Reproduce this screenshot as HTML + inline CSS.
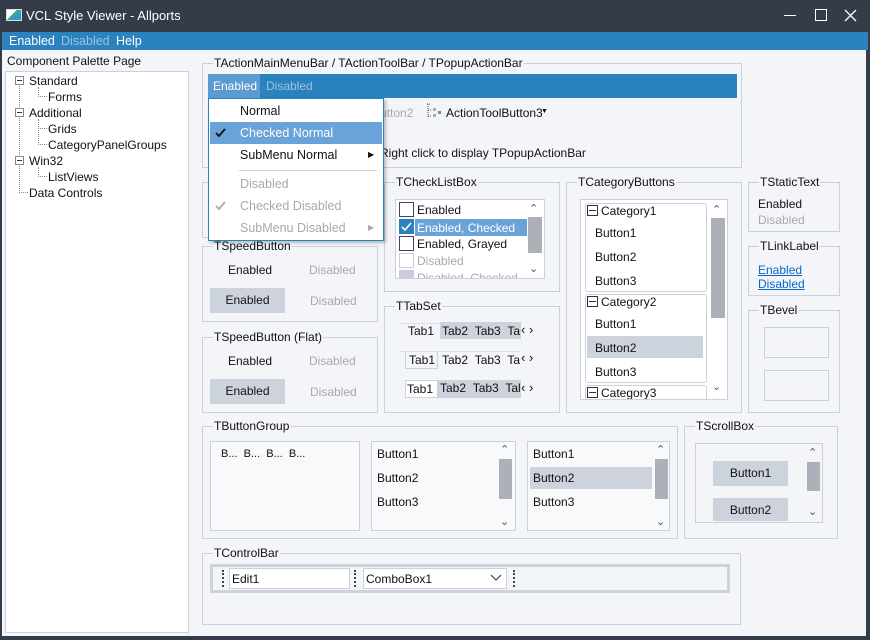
<!DOCTYPE html>
<html><head><meta charset="utf-8"><style>
*{box-sizing:border-box;margin:0;padding:0}
body{width:870px;height:640px;overflow:hidden;background:#343c4a;font-family:"Liberation Sans",sans-serif;font-size:12px;color:#111;position:relative}
.a{position:absolute;white-space:nowrap}
.g{position:absolute;border:1px solid #cbd1db}
.g>.l{position:absolute;left:10px;top:-8px;background:#f3f5f9;padding:0 1px;line-height:14px}
.w{background:#fff;border:1px solid #cbd1db;position:absolute}
.d{color:#a6a9b0}
.btn{position:absolute;background:#cdd3dc;text-align:center}
.sb{position:absolute;background:#adb0b9;width:14px}
.chev{position:absolute;font-size:11px;color:#555}
.pm{position:absolute;width:9px;height:9px;border:1px solid #888;background:#fff}
.pm:after{content:"";position:absolute;left:1px;top:3px;width:5px;border-top:1px solid #333}
</style></head><body>
<!-- title -->
<div class="a" style="left:6px;top:9px;width:16px;height:12px;background:linear-gradient(135deg,#fff 0 40%,#3a8 40% 55%,#39c 55%);border:1px solid #ddd"></div>
<div class="a" style="left:26px;top:8px;color:#fff;font-size:13px">VCL Style Viewer - Allports</div>
<div class="a" style="left:784px;top:15px;width:12px;height:1px;background:#fff"></div>
<div class="a" style="left:815px;top:9px;width:12px;height:12px;border:1px solid #fff"></div>
<svg class="a" style="left:844px;top:9px" width="13" height="13"><path d="M1 1L12 12M12 1L1 12" stroke="#fff" stroke-width="1.3"/></svg>
<!-- menubar -->
<div class="a" style="left:2px;top:32px;width:866px;height:18px;background:#2a82bf"></div>
<div class="a" style="left:9px;top:34px;color:#fff;font-size:12.5px">Enabled</div>
<div class="a" style="left:61px;top:34px;color:#9fc2dc;font-size:12.5px">Disabled</div>
<div class="a" style="left:116px;top:34px;color:#fff;font-size:12.5px">Help</div>
<!-- body -->
<div class="a" style="left:2px;top:50px;width:864px;height:586px;background:#f3f5f9"></div>
<div class="a" style="left:7px;top:54px">Component Palette Page</div>
<div class="w" style="left:5px;top:71px;width:184px;height:562px;border-color:#cbd1db"></div>
<div class="a" style="left:19px;top:86px;height:107px;border-left:1px dotted #888"></div>
<div class="a" style="left:19px;top:192px;width:9px;border-top:1px dotted #888"></div>
<div class="a" style="left:38px;top:87px;height:10px;border-left:1px dotted #888;width:9px;border-bottom:1px dotted #888"></div>
<div class="a" style="left:38px;top:119px;height:26px;border-left:1px dotted #888;width:9px;border-bottom:1px dotted #888"></div>
<div class="a" style="left:38px;top:128px;width:9px;border-top:1px dotted #888"></div>
<div class="a" style="left:38px;top:167px;height:10px;border-left:1px dotted #888;width:9px;border-bottom:1px dotted #888"></div>
<div class="pm" style="left:15px;top:76px"></div>
<div class="pm" style="left:15px;top:108px"></div>
<div class="pm" style="left:15px;top:156px"></div>
<div class="a" style="left:29px;top:74px">Standard</div>
<div class="a" style="left:48px;top:90px">Forms</div>
<div class="a" style="left:29px;top:106px">Additional</div>
<div class="a" style="left:48px;top:122px">Grids</div>
<div class="a" style="left:48px;top:138px">CategoryPanelGroups</div>
<div class="a" style="left:29px;top:154px">Win32</div>
<div class="a" style="left:48px;top:170px">ListViews</div>
<div class="a" style="left:29px;top:186px">Data Controls</div>

<!-- action bar group -->
<div class="g" style="left:202px;top:63px;width:540px;height:105px"><span class="l">TActionMainMenuBar / TActionToolBar / TPopupActionBar</span></div>
<div class="a" style="left:208px;top:74px;width:529px;height:24px;background:#2a82bf"></div>
<div class="a" style="left:208px;top:74px;width:52px;height:24px;background:#5b9bd0"></div>
<div class="a" style="left:213px;top:79px;color:#fff">Enabled</div>
<div class="a" style="left:266px;top:79px;color:#9fc2dc">Disabled</div>
<div class="a d" style="left:380px;top:106px">utton2</div>
<svg class="a" style="left:426px;top:103px" width="16" height="16"><path d="M1 1h3M2 1v13M2 7h4M2 13h4" stroke="#556" fill="none" stroke-dasharray="1 1"/><rect x="7" y="5" width="3" height="3" fill="#9b8"/><rect x="7" y="11" width="3" height="3" fill="#9b8"/><rect x="12" y="8" width="3" height="3" fill="#889"/></svg>
<div class="a" style="left:446px;top:106px">ActionToolButton3</div>
<div class="a" style="left:541px;top:108px;font-size:7px">▼</div>
<div class="a" style="left:380px;top:146px">Right click to display TPopupActionBar</div>

<div class="g" style="left:202px;top:182px;width:176px;height:56px"></div>
<div class="g" style="left:202px;top:246px;width:176px;height:76px"><span class="l">TSpeedButton</span></div>
<div class="a" style="left:228px;top:263px">Enabled</div>
<div class="a d" style="left:309px;top:263px">Disabled</div>
<div class="btn" style="left:210px;top:288px;width:75px;height:25px;line-height:25px">Enabled</div>
<div class="a d" style="left:310px;top:294px">Disabled</div>
<div class="g" style="left:202px;top:337px;width:176px;height:76px"><span class="l">TSpeedButton (Flat)</span></div>
<div class="a" style="left:228px;top:354px">Enabled</div>
<div class="a d" style="left:309px;top:354px">Disabled</div>
<div class="btn" style="left:210px;top:379px;width:75px;height:25px;line-height:25px">Enabled</div>
<div class="a d" style="left:310px;top:385px">Disabled</div>

<!-- checklistbox -->
<div class="g" style="left:384px;top:182px;width:176px;height:110px"><span class="l">TCheckListBox</span></div>
<div class="w" style="left:395px;top:199px;width:150px;height:80px;overflow:hidden">
 <div class="a" style="left:3px;top:2px;width:15px;height:15px;border:1px solid #445"></div><div class="a" style="left:21px;top:3px">Enabled</div>
 <div class="a" style="left:3px;top:19px;width:15px;height:15px;background:#2a82bf"></div>
 <svg class="a" style="left:4px;top:20px" width="13" height="13"><path d="M2 7l3 3 6-7" stroke="#fff" stroke-width="1.6" fill="none"/></svg>
 <div class="a" style="left:19px;top:19px;width:112px;height:17px;background:#6aa3d8;color:#fff;padding:2px">Enabled, Checked</div>
 <div class="a" style="left:3px;top:36px;width:15px;height:15px;border:1px solid #445"></div><div class="a" style="left:21px;top:37px">Enabled, Grayed</div>
 <div class="a" style="left:3px;top:53px;width:15px;height:15px;border:1px solid #ccd"></div><div class="a d" style="left:21px;top:54px">Disabled</div>
 <div class="a" style="left:3px;top:70px;width:15px;height:15px;background:#ccd"></div><div class="a d" style="left:21px;top:71px">Disabled, Checked</div>
 <div class="sb" style="left:132px;top:17px;height:36px"></div>
 <div class="chev" style="left:133px;top:2px">⌃</div><div class="chev" style="left:133px;top:62px">⌄</div>
</div>

<!-- tabset -->
<div class="g" style="left:384px;top:306px;width:176px;height:107px"><span class="l">TTabSet</span></div>
<div class="a" style="left:400px;top:323px;width:144px;height:16px;border-top:1px solid #dde"></div>
<div class="a" style="left:408px;top:324px">Tab1</div>
<div class="a" style="left:440px;top:322px;width:92px;height:17px;background:#cdd3dc"></div>
<div class="a" style="left:442px;top:324px">Tab2 &nbsp;Tab3 &nbsp;Ta</div>
<div class="a" style="left:521px;top:322px;width:22px;height:18px;background:#f3f5f9;font-size:13px">‹ ›</div>
<div class="a" style="left:400px;top:351px;width:144px;border-top:1px solid #dde"></div>
<div class="a" style="left:405px;top:351px;width:33px;height:18px;border:1px solid #cbd1db;border-top:none"></div>
<div class="a" style="left:409px;top:353px">Tab1</div><div class="a" style="left:442px;top:353px">Tab2 &nbsp;Tab3 &nbsp;Ta</div>
<div class="a" style="left:521px;top:350px;width:22px;height:18px;background:#f3f5f9;font-size:13px">‹ ›</div>
<div class="a" style="left:405px;top:380px;width:133px;height:18px;background:#cdd3dc"></div>
<div class="a" style="left:405px;top:380px;width:33px;height:18px;background:#fff;border:1px solid #cbd1db"></div>
<div class="a" style="left:407px;top:382px">Tab1</div><div class="a" style="left:440px;top:381px">Tab2 &nbsp;Tab3 &nbsp;Tal</div>
<div class="a" style="left:521px;top:380px;width:22px;height:18px;background:#f3f5f9;font-size:13px">‹ ›</div>

<!-- category buttons -->
<div class="g" style="left:566px;top:182px;width:176px;height:231px"><span class="l">TCategoryButtons</span></div>
<div class="w" style="left:580px;top:199px;width:148px;height:201px;overflow:hidden">
 <div class="a" style="left:4px;top:3px;width:122px;height:89px;border:1px solid #cbd1db;border-radius:3px"></div>
 <div class="a" style="left:6px;top:5px;width:11px;height:11px;border:1px solid #333"></div><div class="a" style="left:8px;top:10px;width:7px;border-top:1px solid #333"></div>
 <div class="a" style="left:20px;top:4px">Category1</div>
 <div class="a" style="left:14px;top:26px">Button1</div><div class="a" style="left:14px;top:50px">Button2</div><div class="a" style="left:14px;top:74px">Button3</div>
 <div class="a" style="left:4px;top:94px;width:122px;height:89px;border:1px solid #cbd1db;border-radius:3px"></div>
 <div class="a" style="left:6px;top:96px;width:11px;height:11px;border:1px solid #333"></div><div class="a" style="left:8px;top:101px;width:7px;border-top:1px solid #333"></div>
 <div class="a" style="left:20px;top:95px">Category2</div>
 <div class="a" style="left:14px;top:117px">Button1</div>
 <div class="a" style="left:6px;top:136px;width:116px;height:22px;background:#cdd3dc"></div>
 <div class="a" style="left:14px;top:141px">Button2</div><div class="a" style="left:14px;top:165px">Button3</div>
 <div class="a" style="left:4px;top:185px;width:122px;height:30px;border:1px solid #cbd1db;border-radius:3px"></div>
 <div class="a" style="left:6px;top:187px;width:11px;height:11px;border:1px solid #333"></div><div class="a" style="left:8px;top:192px;width:7px;border-top:1px solid #333"></div>
 <div class="a" style="left:20px;top:186px">Category3</div>
 <div class="sb" style="left:130px;top:18px;height:100px"></div>
 <div class="chev" style="left:131px;top:3px">⌃</div><div class="chev" style="left:131px;top:180px">⌄</div>
</div>

<!-- right column -->
<div class="g" style="left:748px;top:182px;width:92px;height:50px"><span class="l">TStaticText</span></div>
<div class="a" style="left:758px;top:197px">Enabled</div><div class="a d" style="left:758px;top:213px">Disabled</div>
<div class="g" style="left:748px;top:246px;width:92px;height:50px"><span class="l">TLinkLabel</span></div>
<div class="a" style="left:758px;top:263px;color:#0a66c8;text-decoration:underline">Enabled</div>
<div class="a" style="left:758px;top:277px;color:#0a66c8;text-decoration:underline">Disabled</div>
<div class="g" style="left:748px;top:310px;width:92px;height:103px"><span class="l">TBevel</span></div>
<div class="a" style="left:764px;top:327px;width:65px;height:31px;border:1px solid #cbd1db"></div>
<div class="a" style="left:764px;top:370px;width:65px;height:31px;border:1px solid #cbd1db"></div>

<!-- button group -->
<div class="g" style="left:202px;top:426px;width:476px;height:113px"><span class="l">TButtonGroup</span></div>
<div class="a" style="left:210px;top:441px;width:150px;height:90px;border:1px solid #cbd1db;background:#f8f9fb"></div>
<div class="a" style="left:221px;top:448px;font-size:11px">B... &nbsp;B... &nbsp;B... &nbsp;B...</div>
<div class="a" style="left:371px;top:441px;width:145px;height:90px;border:1px solid #cbd1db;background:#f8f9fb"></div>
<div class="a" style="left:377px;top:447px">Button1</div><div class="a" style="left:377px;top:471px">Button2</div><div class="a" style="left:377px;top:495px">Button3</div>
<div class="sb" style="left:499px;top:459px;width:13px;height:40px"></div>
<div class="chev" style="left:500px;top:443px">⌃</div><div class="chev" style="left:500px;top:515px">⌄</div>
<div class="a" style="left:527px;top:441px;width:143px;height:90px;border:1px solid #cbd1db;background:#f8f9fb"></div>
<div class="a" style="left:530px;top:467px;width:122px;height:22px;background:#cdd3dc"></div>
<div class="a" style="left:533px;top:447px">Button1</div><div class="a" style="left:533px;top:471px">Button2</div><div class="a" style="left:533px;top:495px">Button3</div>
<div class="sb" style="left:655px;top:459px;width:13px;height:40px"></div>
<div class="chev" style="left:656px;top:443px">⌃</div><div class="chev" style="left:656px;top:515px">⌄</div>

<!-- scroll box -->
<div class="g" style="left:684px;top:426px;width:154px;height:113px"><span class="l">TScrollBox</span></div>
<div class="a" style="left:695px;top:443px;width:128px;height:80px;border:1px solid #cbd1db"></div>
<div class="btn" style="left:713px;top:461px;width:75px;height:25px;line-height:25px">Button1</div>
<div class="btn" style="left:713px;top:498px;width:75px;height:23px;line-height:25px">Button2</div>
<div class="sb" style="left:807px;top:462px;width:13px;height:29px"></div>
<div class="chev" style="left:808px;top:446px">⌃</div><div class="chev" style="left:808px;top:505px">⌄</div>

<!-- control bar -->
<div class="g" style="left:202px;top:553px;width:539px;height:72px"><span class="l">TControlBar</span></div>
<div class="a" style="left:210px;top:564px;width:520px;height:29px;border:3px solid #cdd3dc"></div>
<div class="a" style="left:222px;top:570px;height:17px;border-left:2px dotted #444"></div>
<div class="w" style="left:229px;top:568px;width:121px;height:21px;padding:3px 2px">Edit1</div>
<div class="a" style="left:354px;top:570px;height:17px;border-left:2px dotted #444"></div>
<div class="w" style="left:363px;top:568px;width:144px;height:21px;padding:3px 2px">ComboBox1</div>
<svg class="a" style="left:490px;top:574px" width="12" height="8"><path d="M1 1l5 5 5-5" stroke="#444" fill="none" stroke-width="1.2"/></svg>
<div class="a" style="left:513px;top:570px;height:17px;border-left:2px dotted #444"></div>

<!-- popup menu -->
<div class="a" style="left:208px;top:98px;width:176px;height:143px;background:#fff;border:1px solid #2a82bf;box-shadow:2px 2px 3px rgba(0,0,0,.25)">
 <div class="a" style="left:31px;top:5px;font-size:12.5px">Normal</div>
 <div class="a" style="left:1px;top:23px;width:172px;height:22px;background:#6aa3d8"></div>
 <svg class="a" style="left:6px;top:29px" width="11" height="10"><path d="M1 5l3 3 6-7" stroke="#111" stroke-width="1.8" fill="none"/></svg>
 <div class="a" style="left:31px;top:27px;color:#fff;font-size:12.5px">Checked Normal</div>
 <div class="a" style="left:31px;top:49px;font-size:12.5px">SubMenu Normal</div>
 <div class="a" style="left:159px;top:51px;font-size:8px">▶</div>
 <div class="a" style="left:30px;top:71px;width:138px;border-top:1px solid #ccd"></div>
 <div class="a d" style="left:31px;top:78px;font-size:12.5px">Disabled</div>
 <svg class="a" style="left:6px;top:102px" width="11" height="10"><path d="M1 5l3 3 6-7" stroke="#aaa" stroke-width="1.8" fill="none"/></svg>
 <div class="a d" style="left:31px;top:100px;font-size:12.5px">Checked Disabled</div>
 <div class="a d" style="left:31px;top:122px;font-size:12.5px">SubMenu Disabled</div>
 <div class="a d" style="left:159px;top:124px;font-size:8px">▶</div>
</div>
</body></html>
